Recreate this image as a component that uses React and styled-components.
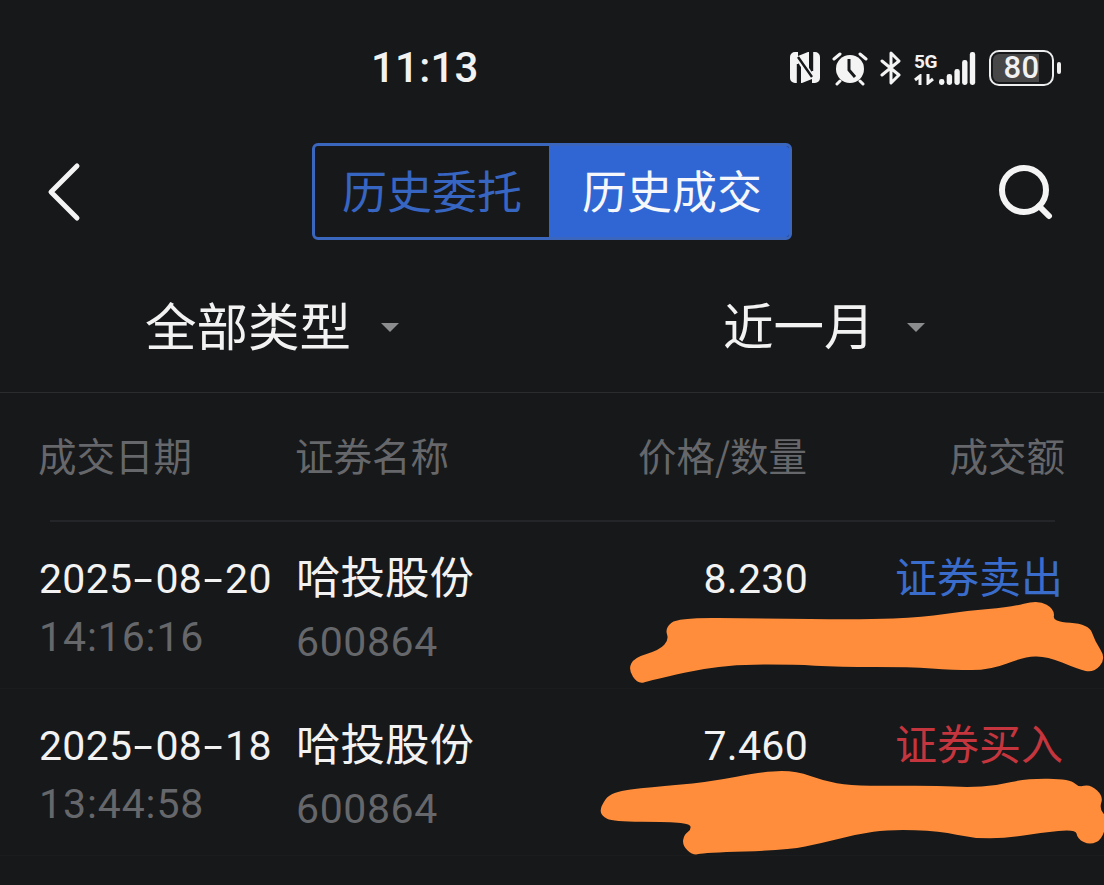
import React from 'react';
import styled, { createGlobalStyle } from 'styled-components';

const GlobalStyle = createGlobalStyle`
  html, body {
    margin: 0;
    padding: 0;
    background: #17181a;
  }
`;

const CJK = `'Noto Sans CJK SC', 'Noto Sans', sans-serif`;
const NUM = `Roboto, 'Noto Sans CJK SC', sans-serif`;

const Page = styled.div`
  position: relative;
  width: 1104px;
  height: 885px;
  overflow: hidden;
  background: #17181a;
  color: #f2f2f2;
  font-family: ${CJK};
`;

const StatusBar = styled.div`
  display: flex;
  align-items: center;
  justify-content: space-between;
  box-sizing: border-box;
  height: 135px;
  padding: 0 43px 0 371px;
`;

const Clock = styled.div`
  font-family: ${NUM};
  font-size: 42px;
  font-weight: 500;
  letter-spacing: 0.2px;
`;

const StatusIcons = styled.div`
  display: flex;
  align-items: center;
  gap: 11px;
`;

const NetworkGroup = styled.div`
  display: grid;
  grid-template-columns: 24px auto;
  column-gap: 1px;
  align-items: end;
  height: 34px;
`;

const NetworkType = styled.div`
  display: flex;
  flex-direction: column;
  justify-content: flex-end;
  gap: 3px;
  font-family: ${NUM};
  font-size: 19px;
  line-height: 18px;
  font-weight: 700;
  letter-spacing: -0.3px;
`;

const Battery = styled.div`
  display: flex;
  align-items: center;
  justify-content: center;
  box-sizing: border-box;
  width: 65px;
  height: 36px;
  padding: 2px;
  border: 2px solid #eee;
  border-radius: 10px;
  font-family: ${NUM};
  font-size: 31px;
  line-height: 1;
  font-weight: 500;
  letter-spacing: 0.5px;
  background: linear-gradient(to right, #474747 78%, transparent 78%);
  background-clip: content-box;
`;

const BatteryWrap = styled.div`
  display: flex;
  align-items: center;
  gap: 3px;
  margin-left: 2px;
`;

const BatteryNub = styled.div`
  width: 4px;
  height: 12px;
  border-radius: 2px;
  background: #eee;
`;

const NavRow = styled.div`
  display: grid;
  grid-template-columns: 312px 480px 1fr;
  align-items: center;
  height: 97px;
  margin-top: 8px;
`;

const BackCell = styled.div`
  display: flex;
  padding-left: 46px;
`;

const SearchCell = styled.div`
  display: flex;
  justify-content: flex-end;
  padding-right: 50px;
`;

const Segment = styled.div`
  display: grid;
  grid-template-columns: 234px 1fr;
  box-sizing: border-box;
  height: 97px;
  border: 3px solid #3a66bd;
  border-radius: 6px;
  overflow: hidden;
`;

const SegmentTab = styled.div`
  display: flex;
  align-items: center;
  justify-content: center;
  font-size: 45px;
  line-height: 1;
  padding: 0 0 5px ${(p) => (p.$active ? 6 : 0)}px;
  color: ${(p) => (p.$active ? '#f5f7fb' : '#3765c2')};
  background: ${(p) => (p.$active ? '#2f66d3' : 'transparent')};
`;

const FilterRow = styled.div`
  display: grid;
  grid-template-columns: 578px 1fr;
  align-items: center;
  box-sizing: border-box;
  height: 153px;
  padding: 15px 0 0 145px;
  border-bottom: 1px solid #2b2c2f;
`;

const Filter = styled.div`
  display: flex;
  align-items: center;
  gap: ${(p) => p.$gap}px;
  font-size: ${(p) => p.$size}px;
  line-height: 1;
  color: #f2f2f2;
`;

const Caret = styled.span`
  width: 0;
  height: 0;
  margin-top: 8px;
  border-left: 9px solid transparent;
  border-right: 9px solid transparent;
  border-top: 9px solid #8b8c8e;
`;

const HeaderRow = styled.div`
  display: grid;
  grid-template-columns: 257px 240px 272px 258px;
  align-items: center;
  box-sizing: border-box;
  height: 127px;
  padding: 0 0 4px 38px;
  font-size: 38.5px;
  line-height: 1;
  color: #66676a;
`;

const HeaderCell = styled.div`
  text-align: ${(p) => (p.$right ? 'right' : 'left')};
  white-space: nowrap;
`;

const Divider = styled.div`
  height: 2px;
  margin: 0 49px 0 50px;
  background: #242528;
`;

const TradeRow = styled.div`
  display: grid;
  grid-template-columns: 257px 240px 272px 255px;
  grid-template-rows: 54px 54px;
  box-sizing: border-box;
  height: 167px;
  padding: 30px 0 0 39px;
  border-bottom: 1px solid #1b1c1e;
`;

const DateText = styled.div`
  font-family: ${NUM};
  font-size: 41px;
  line-height: 54px;
  letter-spacing: 0.3px;
  color: #f2f2f2;
  white-space: nowrap;
`;

const DateDash = styled.span`
  display: inline-block;
  width: 23px;
  text-align: center;
  transform: scaleX(1.7);
`;

const TimeText = styled.div`
  font-family: ${NUM};
  font-size: 41px;
  line-height: 62px;
  letter-spacing: 0.9px;
  color: #66676a;
`;

const StockName = styled.div`
  font-size: 44.5px;
  line-height: 46px;
  color: #f2f2f2;
`;

const StockCode = styled.div`
  font-family: ${NUM};
  font-size: 41px;
  line-height: 72px;
  letter-spacing: 0.6px;
  color: #66676a;
`;

const Price = styled.div`
  font-family: ${NUM};
  font-size: 41px;
  line-height: 54px;
  letter-spacing: 0.3px;
  text-align: right;
  color: #f2f2f2;
`;

const TradeType = styled.div`
  font-size: 42px;
  line-height: 46px;
  text-align: right;
  white-space: nowrap;
  color: ${(p) => (p.$side === 'sell' ? '#3a6ccb' : '#c4353d')};
`;

const ScribbleLayer = styled.svg`
  position: absolute;
  left: 590px;
  top: 590px;
  width: 514px;
  height: 295px;
  pointer-events: none;
`;

const NfcIcon = () => (
  <svg width="32" height="33" viewBox="0 0 32 33">
    <path fill="#f4f4f4" d="M9 1H6a5 5 0 0 0-5 5v21a5 5 0 0 0 5 5h3V12l11 15V1h-1L9 5z" />
    <path fill="#f4f4f4" d="M23 32h3a5 5 0 0 0 5-5V6a5 5 0 0 0-5-5h-3v20L12 6v26h1l10-4z" />
    <path stroke="#17181a" strokeWidth="2.4" fill="none" d="M9 6l14 20M9 13v19M23 1v19" />
  </svg>
);

const AlarmIcon = () => (
  <svg width="36" height="36" viewBox="0 0 36 36">
    <circle cx="18" cy="19" r="14" fill="#f4f4f4" />
    <path d="M17 9v11l6 7" stroke="#17181a" strokeWidth="3" fill="none" />
    <path d="M2 9l6-5M34 9l-6-5M8 31l-3 3M28 31l3 3" stroke="#f4f4f4" strokeWidth="3" strokeLinecap="round" />
  </svg>
);

const BluetoothIcon = () => (
  <svg width="24" height="34" viewBox="0 0 24 34">
    <path d="M3 10l17 14-8 8V2l8 8L3 24" stroke="#f4f4f4" strokeWidth="3" fill="none" strokeLinejoin="round" strokeLinecap="round" />
  </svg>
);

const DataArrows = () => (
  <svg width="22" height="11" viewBox="0 0 22 11">
    <path d="M6 11V2L1 6M14 0v9l5-4" stroke="#f4f4f4" strokeWidth="3" fill="none" />
  </svg>
);

const SIGNAL_BARS = [6, 11, 16, 25, 33];

const SignalIcon = () => (
  <svg width="37" height="34" viewBox="0 0 37 34">
    {SIGNAL_BARS.map((h, i) => (
      <rect key={h} x={i * 7.7} y={34 - h} width="5.4" height={h} rx="2.4" fill="#f4f4f4" />
    ))}
  </svg>
);

const BackIcon = () => (
  <svg width="36" height="60" viewBox="0 0 36 60">
    <path d="M31 4L5 30l26 26" stroke="#f4f4f4" strokeWidth="5" fill="none" strokeLinecap="round" strokeLinejoin="round" />
  </svg>
);

const SearchIcon = () => (
  <svg width="56" height="56" viewBox="0 0 56 56">
    <circle cx="26" cy="26" r="22" stroke="#f4f4f4" strokeWidth="6" fill="none" />
    <path d="M41 42l10 10" stroke="#f4f4f4" strokeWidth="6" strokeLinecap="round" />
  </svg>
);

// midpoints between the traced points give a soft marker edge
const smooth = (pts) => {
  const mid = (a, b) => [(a[0] + b[0]) / 2, (a[1] + b[1]) / 2];
  const start = mid(pts[pts.length - 1], pts[0]);
  let d = `M${start[0]} ${start[1]}`;
  pts.forEach((p, i) => {
    const m = mid(p, pts[(i + 1) % pts.length]);
    d += `Q${p[0]} ${p[1]} ${m[0]} ${m[1]}`;
  });
  return `${d}Z`;
};

const SCRIBBLE_TOP = [
  [118, 238], [135, 205], [210, 183], [240, 150], [228, 115], [265, 86], [500, 88], [820, 92],
  [1000, 85], [1130, 65], [1260, 55], [1345, 33], [1392, 60], [1385, 98], [1495, 105], [1512, 155],
  [1545, 205], [1510, 245], [1465, 235], [1370, 195], [1300, 198], [1200, 237], [1090, 237], [960, 228],
  [750, 228], [600, 220], [385, 222], [180, 268], [145, 280],
];

const SCRIBBLE_BOTTOM = [
  [35, 650], [65, 608], [180, 595], [350, 580], [530, 546], [620, 546], [700, 575], [780, 590],
  [900, 590], [1050, 590], [1130, 595], [1220, 590], [1310, 568], [1440, 570], [1465, 595], [1500, 586],
  [1537, 620], [1525, 655], [1548, 685], [1535, 745], [1500, 762], [1465, 745], [1460, 715], [1350, 725],
  [1250, 742], [1150, 742], [1050, 720], [900, 715], [800, 730], [700, 755], [590, 778], [340, 785],
  [310, 794], [280, 765], [285, 735], [305, 722], [305, 700], [240, 692], [70, 692], [35, 675],
];

const TRADES = [
  { date: ['2025', '08', '20'], time: '14:16:16', price: '8.230', type: '证券卖出', side: 'sell' },
  { date: ['2025', '08', '18'], time: '13:44:58', price: '7.460', type: '证券买入', side: 'buy' },
];

const App = () => (
  <Page>
    <GlobalStyle />
    <StatusBar>
      <Clock>11:13</Clock>
      <StatusIcons>
        <NfcIcon />
        <AlarmIcon />
        <BluetoothIcon />
        <NetworkGroup>
          <NetworkType>
            5G
            <DataArrows />
          </NetworkType>
          <SignalIcon />
        </NetworkGroup>
        <BatteryWrap>
          <Battery>80</Battery>
          <BatteryNub />
        </BatteryWrap>
      </StatusIcons>
    </StatusBar>

    <NavRow>
      <BackCell>
        <BackIcon />
      </BackCell>
      <Segment>
        <SegmentTab>历史委托</SegmentTab>
        <SegmentTab $active>历史成交</SegmentTab>
      </Segment>
      <SearchCell>
        <SearchIcon />
      </SearchCell>
    </NavRow>

    <FilterRow>
      <Filter $size={51.5} $gap={30}>
        全部类型
        <Caret />
      </Filter>
      <Filter $size={50.5} $gap={32}>
        近一月
        <Caret />
      </Filter>
    </FilterRow>

    <HeaderRow>
      <HeaderCell>成交日期</HeaderCell>
      <HeaderCell>证券名称</HeaderCell>
      <HeaderCell $right>价格/数量</HeaderCell>
      <HeaderCell $right>成交额</HeaderCell>
    </HeaderRow>
    <Divider />

    {TRADES.map((t) => (
      <TradeRow key={t.time}>
        <DateText>
          {t.date[0]}
          <DateDash>-</DateDash>
          {t.date[1]}
          <DateDash>-</DateDash>
          {t.date[2]}
        </DateText>
        <StockName>哈投股份</StockName>
        <Price>{t.price}</Price>
        <TradeType $side={t.side}>{t.type}</TradeType>
        <TimeText>{t.time}</TimeText>
        <StockCode>600864</StockCode>
      </TradeRow>
    ))}

    <ScribbleLayer viewBox="0 0 1542 885">
      <path d={smooth(SCRIBBLE_TOP)} fill="#ff8d3b" stroke="#ff8d3b" strokeWidth="6" />
      <path d={smooth(SCRIBBLE_BOTTOM)} fill="#ff8d3b" stroke="#ff8d3b" strokeWidth="6" />
    </ScribbleLayer>
  </Page>
);

export default App;
